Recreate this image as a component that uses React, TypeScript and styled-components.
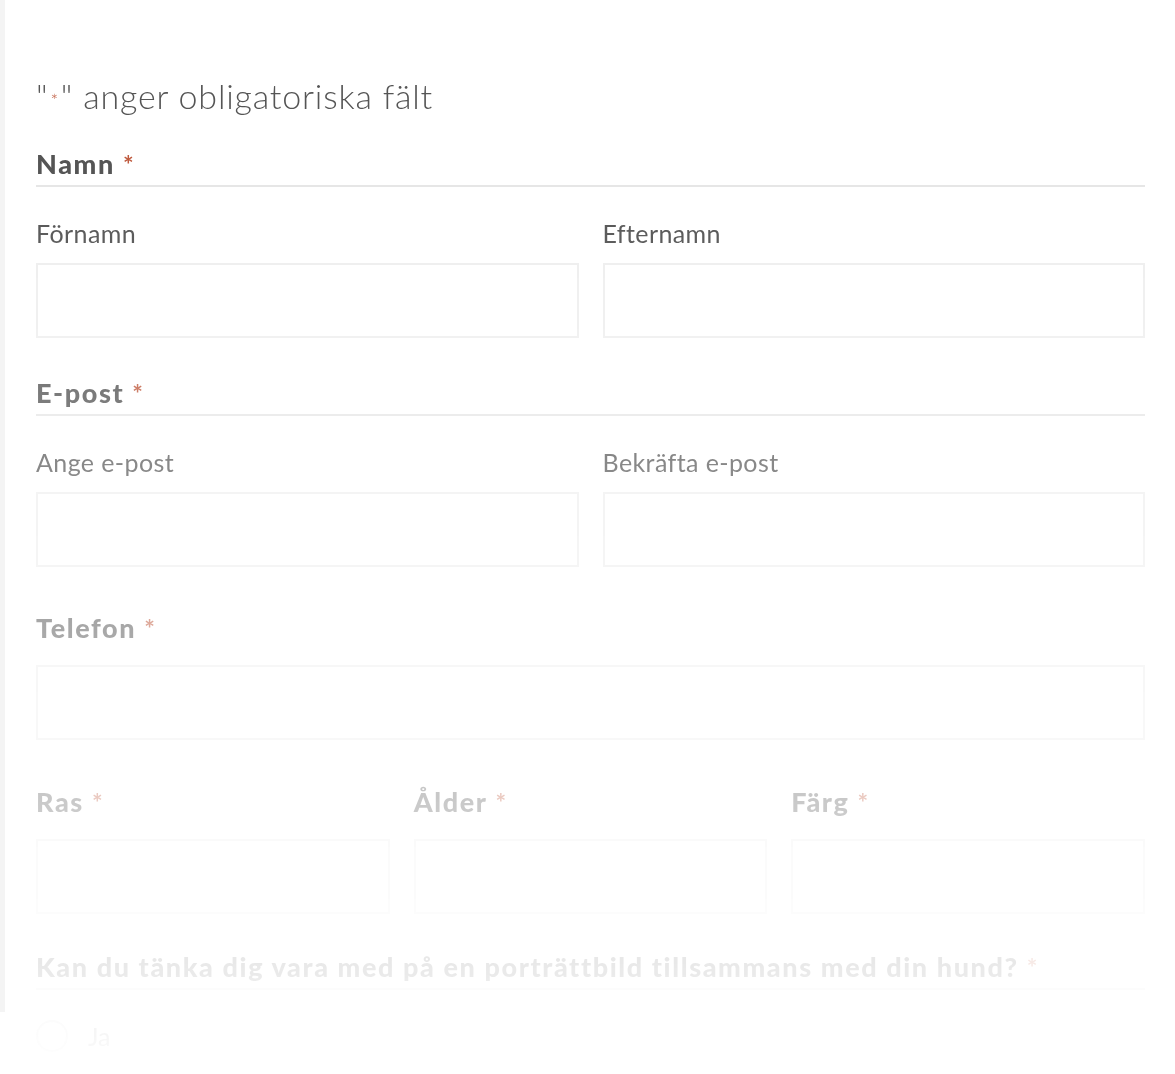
import React from "react";
import styled, { createGlobalStyle } from "styled-components";

const GlobalStyle = createGlobalStyle`
  html, body { margin: 0; padding: 0; background: #ffffff; }
  body { font-family: Lato, "Open Sans", sans-serif; color: #555555; }
  * { box-sizing: border-box; }
`;

const Page = styled.div`
  display: flex;
  width: 1175px;
  min-height: 1074px;
  align-items: flex-start;
`;

const Side = styled.div`
  width: 5px;
  height: 1012px;
  background: #f4f4f4;
  flex: none;
`;

const Form = styled.form`
  flex: 1;
  padding: 73px 30px 0 31px;
  display: flex;
  flex-direction: column;
  -webkit-mask-image: linear-gradient(to bottom, #000 200px, rgba(0,0,0,0) 1080px);
  mask-image: linear-gradient(to bottom, #000 200px, rgba(0,0,0,0) 1080px);
`;

const Intro = styled.p`
  margin: 0 0 25px;
  font-size: 34px;
  font-weight: 300;
  line-height: 46px;
  letter-spacing: 0.8px;
  color: #555;
`;

const Star = styled.span`
  color: #bf5a3e;
  font-size: 18px;
  vertical-align: 2px;
  margin: 0 2px;
`;

const Fieldset = styled.fieldset<{ $top: number }>`
  border: 0;
  margin: ${(p) => p.$top}px 0 0;
  padding: 0;
  min-width: 0;
`;

const Legend = styled.div<{ $line?: boolean }>`
  font-size: 27px;
  font-weight: 900;
  letter-spacing: 1.6px;
  line-height: 32px;
  color: #555;
  padding-bottom: ${(p) => (p.$line ? "5px" : "0")};
  border-bottom: ${(p) => (p.$line ? "2px solid #e6e6e6" : "0")};
  display: flex;
  align-items: baseline;
  gap: 8px;
`;

const LegendStar = styled.span`
  color: #bf5a3e;
  font-size: 25px;
  font-weight: 700;
  letter-spacing: 0;
`;

const Grid = styled.div<{ $cols: number; $top: number }>`
  display: grid;
  grid-template-columns: repeat(${(p) => p.$cols}, 1fr);
  column-gap: 24px;
  margin-top: ${(p) => p.$top}px;
`;

const Field = styled.div`
  display: flex;
  flex-direction: column;
`;

const SubLabel = styled.label`
  font-size: 25px;
  font-weight: 400;
  line-height: 30px;
  letter-spacing: 0.4px;
  color: #555;
  margin-bottom: 15px;
`;

const Input = styled.input`
  height: 75px;
  width: 100%;
  border: 2px solid #eeeeee;
  background: #fff;
  outline: none;
  font-family: inherit;
  font-size: 20px;
  padding: 0 14px;
`;

const FieldInput = styled(Input)<{ $top: number }>`
  margin-top: ${(p) => p.$top}px;
`;

const RadioRow = styled.label`
  display: flex;
  align-items: center;
  gap: 20px;
  margin-top: 30px;
  font-size: 25px;
  color: #555;
`;

const RadioCircle = styled.span`
  width: 32px;
  height: 32px;
  border-radius: 50%;
  border: 2px solid #cccccc;
  flex: none;
`;

export default function App() {
  return (
    <>
      <GlobalStyle />
      <Page>
        <Side />
        <Form>
          <Intro>
            "<Star>*</Star>" anger obligatoriska fält
          </Intro>

          <Fieldset $top={0}>
            <Legend $line>
              Namn <LegendStar>*</LegendStar>
            </Legend>
            <Grid $cols={2} $top={31}>
              <Field>
                <SubLabel>Förnamn</SubLabel>
                <Input />
              </Field>
              <Field>
                <SubLabel>Efternamn</SubLabel>
                <Input />
              </Field>
            </Grid>
          </Fieldset>

          <Fieldset $top={39}>
            <Legend $line>
              E-post <LegendStar>*</LegendStar>
            </Legend>
            <Grid $cols={2} $top={31}>
              <Field>
                <SubLabel>Ange e-post</SubLabel>
                <Input />
              </Field>
              <Field>
                <SubLabel>Bekräfta e-post</SubLabel>
                <Input />
              </Field>
            </Grid>
          </Fieldset>

          <Fieldset $top={45}>
            <Legend>
              Telefon <LegendStar>*</LegendStar>
            </Legend>
            <FieldInput $top={21} />
          </Fieldset>

          <Grid $cols={3} $top={46}>
            <Field>
              <Legend>
                Ras <LegendStar>*</LegendStar>
              </Legend>
              <FieldInput $top={21} />
            </Field>
            <Field>
              <Legend>
                Ålder <LegendStar>*</LegendStar>
              </Legend>
              <FieldInput $top={21} />
            </Field>
            <Field>
              <Legend>
                Färg <LegendStar>*</LegendStar>
              </Legend>
              <FieldInput $top={21} />
            </Field>
          </Grid>

          <Fieldset $top={37}>
            <Legend $line>
              Kan du tänka dig vara med på en porträttbild tillsammans med din hund?{" "}
              <LegendStar>*</LegendStar>
            </Legend>
            <RadioRow>
              <RadioCircle />
              Ja
            </RadioRow>
          </Fieldset>
        </Form>
      </Page>
    </>
  );
}
